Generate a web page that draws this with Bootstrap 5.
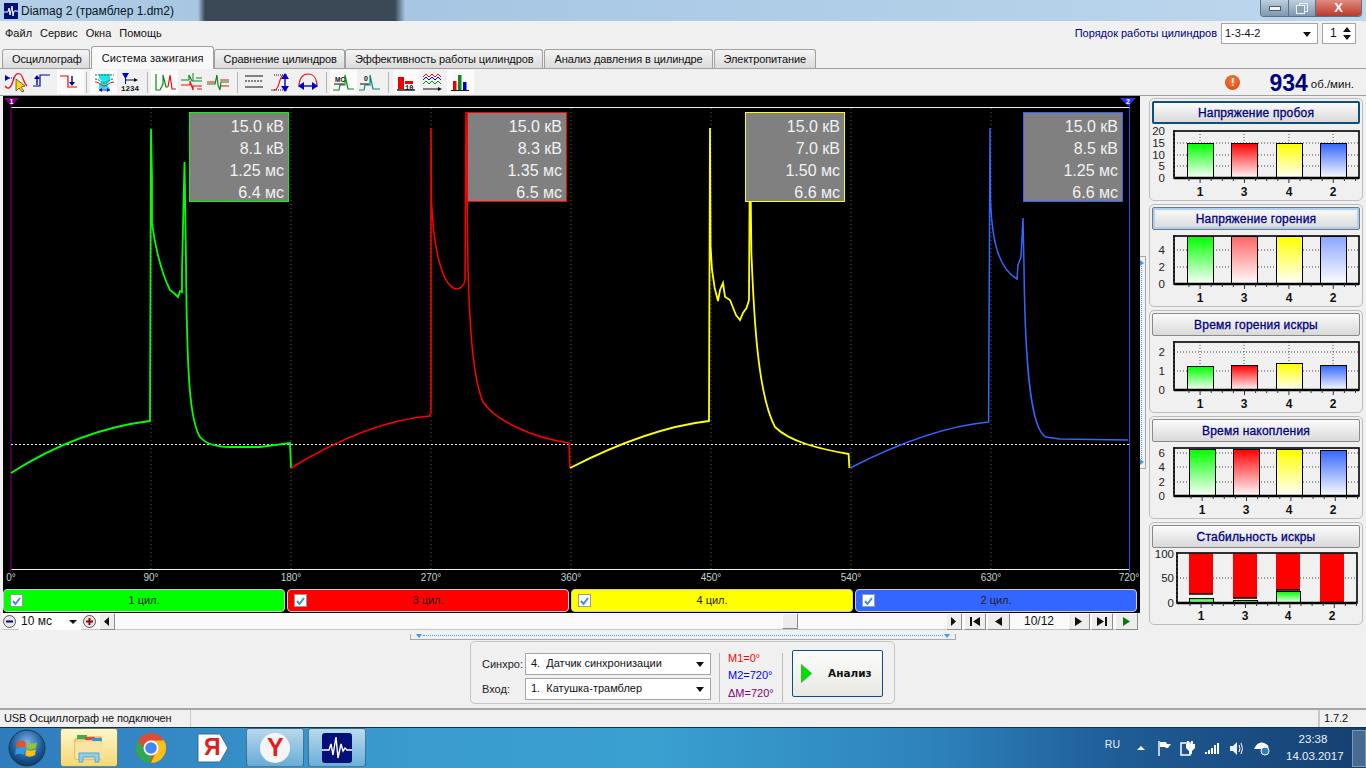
<!DOCTYPE html>
<html lang="ru">
<head>
  <meta charset="UTF-8" />
  <title>Diamag 2</title>
  <link href="https://cdn.jsdelivr.net/npm/bootstrap@5.3.3/dist/css/bootstrap.min.css" rel="stylesheet">
  <style>
    html, body { height: 768px; overflow: hidden; }
    body {
      background-color: #f0f0f0;
      font-family: "Liberation Sans", Arial, sans-serif;
      font-size: 11px;
      letter-spacing: 0;
      color: #111;
    }
    svg { display: block; }

    /* window title */
    #titlebar { height: 21px; flex: none; background: linear-gradient(90deg, #b5d0e8 0, #a8c6e2 198px, #3b4855 205px, #3b4855 395px, #a6c6e3 405px, #bdd7ed 100%); font-size: 12px; }
    #titlebar .app-name { color: #0a1522; margin-left: 3px; font-size: 12px; }
    .win-btns { height: 17px; margin-right: 4px; border: 1px solid #5b6f85; border-top: 0; border-radius: 0 0 4px 4px; overflow: hidden; }
    .win-btns div { height: 100%; background: linear-gradient(#bdcfe0, #7f97ad); border-right: 1px solid #5b6f85; }
    .win-btns .w-min { width: 28px; }
    .win-btns .w-max { width: 27px; }
    .win-btns .w-close { width: 45px; background: linear-gradient(#e08a7e, #b93a2c); border: 0; color: #fff; font-size: 13px; font-weight: 700; line-height: 15px; text-align: center; }

    #menubar { height: 25px; flex: none; padding: 0 5px 0 0; }
    #menubar .menu-item { margin-left: 5px; margin-right: 3px; font-size: 11px; }
    .order-lbl { color: #00007f; margin-right: 4px; }
    .fake-sel { border: 1px solid #a5a5a5; background: #fff; height: 21px; padding: 0 0 0 3px; font-size: 11px; color: #111; border-radius: 0; line-height: 19px; position: relative; }
    .fake-sel::after { content: ""; position: absolute; right: 6px; top: 8px; border: 4px solid transparent; border-top: 5px solid #111; border-bottom: 0; }
    .fake-sel.no-arrow::after { display: none; }
    .spin-arr { position: absolute; right: 4px; top: 2px; }

    #tabs { height: 22px; flex: none; padding-left: 2px; border: 0; flex-wrap: nowrap; align-items: flex-end; }
    #tabs .nav-link { height: 19px; padding: 2px 7px 0 9px; color: #111; font-size: 11px; letter-spacing: -.1px; border: 1px solid #a0a0a0; border-bottom: 0; border-radius: 3px 3px 0 0; background: linear-gradient(#f4f4f4, #dcdcdc); margin: 0 1px 0 0; white-space: nowrap; line-height: 15px; }
    #tabs .nav-link.active { height: 23px; background: #f8f8f8; padding: 4px 9px 0 10px; margin: 0 0 -1px; letter-spacing: .1px; position: relative; z-index: 2; }
    #tabs .nav-link.tab-wide { padding-right: 9px; }
    #tabs .nav-link.tab-tight { margin-right: 0; }

    #toolbar { height: 28px; flex: none; border-top: 1px solid #a0a0a0; border-bottom: 1px solid #a0a0a0; padding-left: 3px; padding-top: 1px; }
    .tb-btn { width: 27px; height: 24px; flex: none; }
    .tb-on { background: #fbfbfb; }
    .tb-sep { flex: none; border-left: 1px solid #b5b5b5; margin-top: 2px; height: 21px; }
    .rpm-val { font-size: 23px; font-weight: 700; color: #00007f; line-height: 24px; margin-left: 29px; }
    .rpm-unit { font-size: 11.5px; color: #111; margin: 4px 12px 0 3px; }
    .alert-dot { width: 15px; height: 15px; border-radius: 50%; background: radial-gradient(circle at 50% 35%, #f47a3c, #d8430f); color: #fff; font-weight: 700; font-size: 11px; line-height: 15px; text-align: center; }

    #mainarea { height: 534px; flex: none; }
    #scopecol { width: 1140px; padding-left: 3px; flex: none; }
    #scope { width: 1137px; background: #000; position: relative; height: 517px; }
    .val-box { position: absolute; top: 16px; width: 100px; height: 90px; background: #808080; border: 1px solid; color: #f2f2f2; font-size: 16px; line-height: 22px; text-align: right; padding: 3px 4px 0 0; }
    .cyl-row { gap: 2px; height: 23px; padding-right: 3px; }
    .cyl-btn { flex: 1 1 0; border: 1px solid #ccc; border-radius: 4px; color: #222; font-size: 11px; line-height: 20px; text-align: center; position: relative; height: 23px; }
    .cyl-check { position: absolute; left: 6px; top: 4px; width: 13px; height: 13px; background: #fff; border: 1px solid #999; }
    #seekrow { height: 17px; background: #f9f9f9; border-bottom: 1px solid #c4c4c4; width: 1136px; margin-left: -1px; }
    .rnd-btn { width: 15px; height: 15px; flex: none; }
    .step-btn { height: 17px; flex: none; background: #ededed; border: 1px solid #fff; border-right-color: #8e8e8e; border-bottom-color: #8e8e8e; display: flex; align-items: center; justify-content: center; }
    .seek-track { flex: 1 1 0; position: relative; }
    .seek-thumb { position: absolute; left: 667px; top: 0; width: 16px; height: 16px; background: #ececec; border: 1px solid #fff; border-right-color: #888; border-bottom-color: #888; }
    .pg-num { width: 58px; text-align: center; font-size: 12px; flex: none; }
    .zoom-sel { width: 62px; border: 0; background: #fff; height: 17px; font-size: 12px; padding: 0 0 0 2px; line-height: 16px; position: relative; flex: none; margin-left: 2px; }
    .zoom-sel::after { content: ""; position: absolute; right: 4px; top: 7px; border: 4px solid transparent; border-top: 4px solid #111; border-bottom: 0; }

    .split-v { width: 6px; height: 213px; margin-top: 160px; border: 1px solid #a8a8a8; border-left: 0; flex: none; position: relative; }
    .split-v i { position: absolute; left: 1px; top: 9px; bottom: 9px; border-left: 1px dotted #3d9bf0; }
    .split-v::before, .split-v::after { content: ""; position: absolute; left: 0; border: 3px solid transparent; border-left: 4px solid #3d9bf0; border-right: 0; }
    .split-v::before { top: 3px; }
    .split-v::after { bottom: 3px; }
    #rightcol { width: 214px; margin-left: 3px; padding-top: 2px; gap: 3px; flex: none; }
    .chart-panel { height: 103px; border: 1px solid #bcbcbc; border-radius: 5px; padding: 2px 2px 0; overflow: hidden; }
    .chart-title { height: 23px; line-height: 22px; text-align: center; color: #00007f; font-size: 12px; letter-spacing: .2px; border: 1px solid #8a8a8a; border-radius: 2px; background: linear-gradient(#fbfbfb, #d9d9d9); -webkit-text-stroke: .3px #00007f; }
    .chart-title.t-focus { border: 2px solid #0b4e7f; line-height: 20px; }
    .chart-title.t-hover { border: 1px solid #777; box-shadow: inset 0 0 0 2px #a9d0f5; }

    #bottomarea { height: 78px; flex: none; }
    .split-h { width: 546px; height: 6px; margin-left: 410px; border: 1px solid #a8a8a8; border-top: 0; position: relative; margin-top: 4px; }
    .split-h i { position: absolute; left: 12px; right: 12px; top: 1px; border-top: 1px dotted #3d9bf0; }
    .split-h::before, .split-h::after { content: ""; position: absolute; top: 0; border: 3px solid transparent; border-top: 4px solid #3d9bf0; border-bottom: 0; }
    .split-h::before { left: 5px; }
    .split-h::after { right: 5px; }
    .run-panel { width: 425px; height: 63px; margin: 1px 0 0 470px; border: 1px solid #c4c4c4; border-radius: 5px; position: relative; padding: 11px 0 0 11px; }
    .run-lbl { width: 43px; font-size: 11px; color: #222; }
    .run-sel { width: 186px; font-size: 11px; padding-left: 5px; height: 22px; }
    .run-vsep { border-left: 1px solid #bbb; height: 49px; margin: 0 8px; }
    .mark-txt { font-size: 11px; line-height: 17px; width: 54px; margin-top: -3px; }
    .go-btn { width: 91px; height: 47px; padding: 0; border: 1px solid #0b4e7f; border-radius: 2px; background: linear-gradient(#fcfcfc, #e8e8e2); color: #111; font-family: "DejaVu Sans", sans-serif; font-size: 10.5px; font-weight: 700; margin-top: -3px; }

    #statusbar { height: 19px; flex: none; border-top: 2px solid #a5a5a5; line-height: 16px; letter-spacing: -.1px; }
    .st-cell { border-right: 1px solid #c9c9c9; padding-left: 4px; height: 17px; }

    #taskbar { height: 41px; flex: none; background: linear-gradient(90deg, #2f7cbd 0, #3a9bce 30%, #39a0d0 48%, #2e83bd 68%, #1f5c96 82%, #153f70 100%); border-top: 1px solid #12324f; color: #fff; position: relative; }
    .task-tile { width: 58px; height: 39px; flex: none; margin-left: 4px; border: 1px solid rgba(20, 60, 90, .6); border-radius: 3px; }
    .tile-active { background: linear-gradient(#fdf7c9, #f3d873); }
    .tile-open { background: linear-gradient(rgba(255,255,255,.65), rgba(255,255,255,.25)); }
    .tile-plain { border-color: transparent; }
    .tray-txt { font-size: 10.5px; color: #eaf2fa; }
    .clock { width: 54px; text-align: center; font-size: 11.5px; line-height: 17px; color: #eaf2fa; margin-left: 16px; }
    .show-desk { width: 14px; height: 37px; margin: 1px 0 0 12px; border: 1px solid #7d99b3; background: rgba(255,255,255,.22); flex: none; }
    .tray-ico { margin-left: 9px; }
  </style>
</head>
<body class="d-flex flex-column">

  <div id="titlebar" class="d-flex justify-content-between">
    <div class="d-flex align-items-center">
      <svg class="ms-1" width="14" height="16" viewBox="0 0 14 16"><rect width="14" height="16" fill="#050f7a"/><path d="M0 9H4L5 5 6 12 8 3 9 13 10 8H14" fill="none" stroke="#fff" stroke-width="1"/></svg>
      <span class="app-name">Diamag 2 (трамблер 1.dm2)</span>
    </div>
    <div class="win-btns d-flex">
      <div class="w-min d-flex align-items-center justify-content-center"><svg width="12" height="5"><rect x=".5" y=".5" width="11" height="4" fill="#eef3f8" stroke="#4d5d6d"/></svg></div>
      <div class="w-max d-flex align-items-center justify-content-center"><svg width="12" height="11"><rect x="3.5" y=".5" width="8" height="8" fill="none" stroke="#eef3f8"/><rect x=".5" y="2.5" width="8" height="8" fill="#8aa0b5" stroke="#eef3f8"/></svg></div>
      <div class="w-close">X</div>
    </div>
  </div>

  <div id="menubar" class="d-flex align-items-center">
    <span class="menu-item">Файл</span><span class="menu-item">Сервис</span><span class="menu-item">Окна</span><span class="menu-item">Помощь</span>
    <div class="ms-auto d-flex align-items-center">
      <span class="order-lbl">Порядок работы цилиндров</span>
      <div class="fake-sel" style="width:97px">1-3-4-2</div>
      <div class="fake-sel no-arrow ms-1" style="width:34px;padding-left:7px;font-size:12px">1
        <svg class="spin-arr" width="8" height="15"><path d="M0 6 4 1 8 6ZM0 9 4 14 8 9Z" fill="#111"/></svg>
      </div>
      <span style="width:5px"></span>
    </div>
  </div>

  <ul id="tabs" class="nav nav-tabs">
    <li class="nav-item"><a class="nav-link" href="#">Осциллограф</a></li>
    <li class="nav-item"><a class="nav-link active" href="#">Система зажигания</a></li>
    <li class="nav-item"><a class="nav-link tab-tight" href="#">Сравнение цилиндров</a></li>
    <li class="nav-item"><a class="nav-link tab-wide" href="#">Эффективность работы цилиндров</a></li>
    <li class="nav-item"><a class="nav-link tab-wide" href="#">Анализ давления в цилиндре</a></li>
    <li class="nav-item"><a class="nav-link tab-wide" href="#">Электропитание</a></li>
  </ul>

  <div id="toolbar" class="d-flex">
    <div class="tb-btn"><svg width="27" height="24"><path d="M2 16C5 20 8 18 10 11S14 3 17 4 20 12 24 16" fill="none" stroke="#e11" stroke-width="1.3"/><path d="M4 8H12" stroke="#00c" stroke-dasharray="1 1"/><path d="M2 5 7 8 2 11Z" fill="#00c"/><path d="M13 9V21L16 18 19 22 21 21 18 17 22 16Z" fill="#ffd800" stroke="#333" stroke-width=".7"/></svg></div>
    <div class="tb-btn"><svg width="27" height="24"><path d="M3 16H10V5H20" fill="none" stroke="#00a" stroke-width="1.2"/><path d="M4 9 7 5 10 9ZM6.3 9H7.7V15H6.3Z" fill="#00a"/></svg></div>
    <div class="tb-btn tb-on"><svg width="27" height="24"><path d="M3 6H11V17H20" fill="none" stroke="#e00" stroke-width="1.2"/><path d="M12 12 15 16 18 12ZM14.3 6H15.7V12H14.3Z" fill="#008"/></svg></div>
    <div class="tb-sep" style="margin-left:2px;margin-right:3px"></div>
    <div class="tb-btn tb-on"><svg width="27" height="24"><path d="M9 4H20V11L17 14 20 19H9V14L12 11 9 8Z" fill="#19e6ef"/><path d="M5 5H24M5 9C10 9 11 13 14 13S19 9 24 9" fill="none" stroke="#0a7a2a" stroke-dasharray="2 1"/><path d="M5 12C10 12 11 16 14 16S19 12 24 12" fill="none" stroke="#e11"/><path d="M9 20H20" stroke="#00c"/><path d="M9 20 12 18V22ZM20 20 17 18V22Z" fill="#00c"/></svg></div>
    <div class="tb-btn"><svg width="27" height="24"><path d="M5 3H12L8.5 9Z" fill="#00c"/><path d="M8.5 8V14" stroke="#00c"/><path d="M9 10H19" stroke="#111"/><path d="M21 10 17 8V12Z" fill="#111"/><text x="4" y="21" font-family="Liberation Mono, monospace" font-size="7.5" font-weight="700" fill="#111">1234</text></svg></div>
    <div class="tb-sep" style="margin-left:3px;margin-right:3px"></div>
    <div class="tb-btn tb-on"><svg width="27" height="24"><path d="M5 4V20H9L12 14V5L15 17H17" fill="none" stroke="#0a8a1a" stroke-width="1.2"/><path d="M17 17 19 5 21 19H25" fill="none" stroke="#e11" stroke-width="1.2"/></svg></div>
    <div class="tb-btn"><svg width="27" height="24"><path d="M3 10H11V5L14 11H24" fill="none" stroke="#0a8a1a" stroke-width="1.2"/><path d="M15 3V11M18 8H24" stroke="#0a8a1a"/><path d="M3 15H12V11L15 20V16H24M19 19H24" fill="none" stroke="#e11" stroke-width="1.2"/></svg></div>
    <div class="tb-btn"><svg width="27" height="24"><path d="M2 14H10L12 5 13 15 15 20 16 12H24" fill="none" stroke="#0a8a1a" stroke-width="1.2"/><path d="M2 12H10M15 10H24M15 16H24" stroke="#e11" stroke-width="1.2"/></svg></div>
    <div class="tb-sep" style="margin-left:5px;margin-right:3px"></div>
    <div class="tb-btn"><svg width="27" height="24"><path d="M4 6H22M4 17H22" stroke="#111" stroke-width="1.2"/><path d="M4 11H22" stroke="#111" stroke-dasharray="2 1"/></svg></div>
    <div class="tb-btn"><svg width="27" height="24"><path d="M3 20H7C11 20 12 5 15 5" fill="none" stroke="#e11" stroke-width="1.2"/><path d="M6 5H20M6 20H20" stroke="#111" stroke-dasharray="1 1"/><path d="M17 7V18" stroke="#00c" stroke-width="1.4"/><path d="M13 9 17 3 21 9ZM13 16 17 22 21 16Z" fill="#00c"/></svg></div>
    <div class="tb-btn"><svg width="27" height="24"><path d="M4 17C4 8 8 4 13 4S22 8 22 17" fill="none" stroke="#e11" stroke-width="1.2"/><path d="M7 16H19" stroke="#00c" stroke-width="1.4"/><path d="M3 16 9 12V20ZM23 16 17 12V20Z" fill="#00c"/></svg></div>
    <div class="tb-sep" style="margin-left:4px;margin-right:3px"></div>
    <div class="tb-btn tb-on"><svg width="27" height="24"><path d="M3 20H9L10 15H15V5L18 19H24" fill="none" stroke="#0a8a1a" stroke-width="1.2"/><path d="M4 14H14" stroke="#111"/><text x="5" y="12" font-family="Liberation Sans, sans-serif" font-size="6.5" font-weight="700" fill="#111">MC</text></svg></div>
    <div class="tb-btn"><svg width="27" height="24"><path d="M2 20H7L8 15H13V5L16 19H23" fill="none" stroke="#0a8a7a" stroke-width="1.2"/><path d="M3 14H12" stroke="#111"/><text x="7" y="11" font-family="Liberation Sans, sans-serif" font-size="7" font-weight="700" fill="#111">0</text></svg></div>
    <div class="tb-sep" style="margin-left:4px;margin-right:4px"></div>
    <div class="tb-btn tb-on"><svg width="27" height="24"><rect x="5" y="7" width="6" height="12" fill="#e00"/><rect x="12" y="11" width="8" height="3" fill="#e00"/><path d="M4 20H22" stroke="#111" stroke-width="1.4"/><text x="12" y="19.5" font-family="Liberation Mono, monospace" font-size="7" font-weight="700" fill="#111">10</text></svg></div>
    <div class="tb-btn"><svg width="27" height="24"><path d="M3 7 6 4 9 7 12 4 15 7 18 4 21 7" fill="none" stroke="#e11"/><path d="M3 10 6 7 9 10 12 7 15 10 18 7 21 10" fill="none" stroke="#00c"/><path d="M3 14 6 11 9 14 12 11 15 14 18 11 21 14" fill="none" stroke="#0a8a1a"/><path d="M3 19H20" stroke="#111"/><path d="M22 19 18 17V21Z" fill="#111"/></svg></div>
    <div class="tb-btn tb-on"><svg width="27" height="24"><rect x="6" y="11" width="3.5" height="9" fill="#e00"/><rect x="11" y="5" width="3.5" height="15" fill="#0a8a1a"/><rect x="16" y="12" width="3.5" height="8" fill="#00c"/><path d="M4 20.5H22" stroke="#111"/></svg></div>
    <div class="ms-auto d-flex align-items-center">
      <div class="alert-dot">!</div>
      <span class="rpm-val">934</span><span class="rpm-unit">об./мин.</span>
    </div>
  </div>

  <div id="mainarea" class="d-flex">
    <div id="scopecol">
      <div id="scope" class="d-flex flex-column">
        <svg width="1137" height="493" viewBox="3 96 1137 493">
          <g stroke="#5a5a5a" stroke-dasharray="1 3">
            <path d="M151 108V569M291 108V569M431 108V569M571 108V569M711 108V569M851 108V569M991 108V569"/>
          </g>
          <path d="M11 107.500H1130M11 569.500H1130" stroke="#eee"/>
          <path d="M11 98V572" stroke="#800080"/>
          <path d="M1129.500 98V572" stroke="#2a4ff5"/>
          <path d="M11 444.500H1130" stroke="#f4f4f4" stroke-dasharray="2 2"/>
          <!-- traces, digitised from the capture -->
          <path fill="none" stroke="#0f0" stroke-width="1.8" d="M11 473C55 445 100 427 150 421L151 129 152 178 152 223C154 240 160 270 170 290L175 294 178 297 180 291 182 292 182 273 183 227 184.500 162 185 190 186 263C187 380 190 420 200 437C206 444 215 447 230 447L260 447 290 443 291 468"/>
          <path fill="none" stroke="#f00" stroke-width="1.5" d="M291 468C340 438 385 420 429 416L431 413 431 128 431.500 200C433 240 440 285 456 289C461 289 464 286 465 280L466 112 468 267C470 340 474 380 483 402C495 420 530 437 569 443L570 468"/>
          <path fill="none" stroke="#ff0" stroke-width="1.8" d="M570 468C615 445 665 426 709 421L710 128 710.600 246 712 270 714.700 288 718 301 720 290 723 283 725 296.700 730 300 736 315 740 320 743 313 746.500 308 749 300 750 130 751.400 253C754 320 758 395 775 427C790 442 820 449 848.600 454L849.400 468"/>
          <path fill="none" stroke="#36f" stroke-width="1.5" d="M850 468C895 445 945 426 988.600 422L990 128 990.500 200C992 240 998 268 1017 279L1018 265 1021 257 1023 218 1024 267C1025 360 1030 430 1046 437L1060 439 1128 440"/>
          <path d="M4 98H19L11.500 106Z" fill="#800080"/>
          <text x="11.500" y="104" text-anchor="middle" font-family="Liberation Sans, sans-serif" font-size="7" font-weight="700" fill="#fff">1</text>
          <path d="M1120 98H1136L1128 106Z" fill="#2a2ff5"/>
          <text x="1128" y="104" text-anchor="middle" font-family="Liberation Sans, sans-serif" font-size="7" font-weight="700" fill="#fff">2</text>
          <g font-family="Liberation Sans, sans-serif" font-size="10" fill="#c4d6d0" text-anchor="middle">
            <text x="11" y="581">0°</text><text x="151" y="581">90°</text><text x="291" y="581">180°</text><text x="431" y="581">270°</text><text x="571" y="581">360°</text><text x="711" y="581">450°</text><text x="851" y="581">540°</text><text x="991" y="581">630°</text><text x="1129" y="581">720°</text>
          </g>
        </svg>
        <div class="val-box" style="left:186px;border-color:#0f0">15.0 кВ<br>8.1 кВ<br>1.25 мс<br>6.4 мс</div>
        <div class="val-box" style="left:464px;border-color:#f00">15.0 кВ<br>8.3 кВ<br>1.35 мс<br>6.5 мс</div>
        <div class="val-box" style="left:742px;border-color:#ff0">15.0 кВ<br>7.0 кВ<br>1.50 мс<br>6.6 мс</div>
        <div class="val-box" style="left:1020px;border-color:#36f">15.0 кВ<br>8.5 кВ<br>1.25 мс<br>6.6 мс</div>
        <div class="cyl-row d-flex">
          <div class="cyl-btn" style="background:#0f0"><span class="cyl-check"><svg width="11" height="11"><path d="M2 6 4.500 9 9 3" fill="none" stroke="#3d8fe0" stroke-width="2"/></svg></span>1 цил.</div>
          <div class="cyl-btn" style="background:#f00"><span class="cyl-check"><svg width="11" height="11"><path d="M2 6 4.500 9 9 3" fill="none" stroke="#3d8fe0" stroke-width="2"/></svg></span>3 цил.</div>
          <div class="cyl-btn" style="background:#ff0"><span class="cyl-check"><svg width="11" height="11"><path d="M2 6 4.500 9 9 3" fill="none" stroke="#3d8fe0" stroke-width="2"/></svg></span>4 цил.</div>
          <div class="cyl-btn" style="background:#36f"><span class="cyl-check"><svg width="11" height="11"><path d="M2 6 4.500 9 9 3" fill="none" stroke="#3d8fe0" stroke-width="2"/></svg></span>2 цил.</div>
        </div>
      </div>
      <div id="seekrow" class="d-flex align-items-center">
        <div class="rnd-btn"><svg width="15" height="15"><circle cx="7.500" cy="7.500" r="6" fill="#e8e8e8" stroke="#555"/><path d="M4 7.500H11" stroke="#00007f" stroke-width="2"/></svg></div>
        <div class="zoom-sel">10 мс</div>
        <div class="rnd-btn" style="margin-left:1px"><svg width="15" height="15"><circle cx="7.500" cy="7.500" r="6" fill="#e8e8e8" stroke="#555"/><path d="M4 7.500H11M7.500 4V11" stroke="#900" stroke-width="2"/></svg></div>
        <div class="step-btn" style="width:16px;margin-left:2px"><svg width="6" height="9"><path d="M5 0V9L0 4.500Z" fill="#111"/></svg></div>
        <div class="seek-track align-self-stretch"><div class="seek-thumb"></div></div>
        <div class="step-btn" style="width:16px"><svg width="6" height="9"><path d="M0 0V9L5 4.500Z" fill="#111"/></svg></div>
        <div class="step-btn" style="width:22px;margin-left:2px"><svg width="11" height="9"><path d="M10 0V9L3 4.500Z M0 0H2V9H0Z" fill="#111"/></svg></div>
        <div class="step-btn" style="width:23px;margin-left:1px"><svg width="8" height="9"><path d="M7 0V9L0 4.500Z" fill="#111"/></svg></div>
        <div class="pg-num">10/12</div>
        <div class="step-btn" style="width:22px"><svg width="8" height="9"><path d="M0 0V9L7 4.500Z" fill="#111"/></svg></div>
        <div class="step-btn" style="width:22px;margin-left:1px"><svg width="11" height="9"><path d="M0 0V9L7 4.500Z M8 0H10V9H8Z" fill="#111"/></svg></div>
        <div class="step-btn" style="width:23px;margin-left:2px"><svg width="8" height="9"><path d="M0 0V9L7 4.500Z" fill="#0a7a0a"/></svg></div>
      </div>
    </div>
    <div class="split-v"><i></i></div>
    <div id="rightcol" class="d-flex flex-column"></div>
  </div>

  <div id="bottomarea">
    <div class="split-h"><i></i></div>
    <div class="run-panel d-flex">
      <div>
        <div class="d-flex align-items-center" style="margin-bottom:3px">
          <span class="run-lbl">Синхро:</span><div class="fake-sel run-sel">4.&nbsp; Датчик синхронизации</div>
        </div>
        <div class="d-flex align-items-center">
          <span class="run-lbl">Вход:</span><div class="fake-sel run-sel">1.&nbsp; Катушка-трамблер</div>
        </div>
      </div>
      <div class="run-vsep"></div>
      <div class="mark-txt">
        <div style="color:#f00">М1=0°</div>
        <div style="color:#00f">М2=720°</div>
        <div style="color:#800080;margin-top:1px">ΔМ=720°</div>
      </div>
      <div class="run-vsep" style="margin-left:0;margin-right:9px"></div>
      <button class="btn go-btn d-flex align-items-center">
        <svg class="ms-2" width="11" height="19"><path d="M0 0 11 9.500 0 19Z" fill="#00e000" stroke="#888" stroke-width=".5"/></svg>
        <span style="margin-left:16px">Анализ</span>
      </button>
    </div>
  </div>

  <div id="statusbar" class="d-flex">
    <div class="st-cell" style="width:191px">USB Осциллограф не подключен</div>
    <div class="st-cell flex-grow-1"></div>
    <div class="st-cell" style="width:47px;border:0;border-left:1px solid #c9c9c9">1.7.2</div>
  </div>

  <div id="taskbar" class="d-flex">
    <svg class="ms-2" style="margin-top:1px" width="38" height="38" viewBox="0 0 38 38">
      <defs><radialGradient id="orb" cx=".5" cy=".35" r=".7"><stop offset="0" stop-color="#7fb7e4"/><stop offset=".6" stop-color="#1c5c9c"/><stop offset="1" stop-color="#0d2f57"/></radialGradient></defs>
      <circle cx="19" cy="19" r="18" fill="url(#orb)" stroke="#1a3a55"/>
      <path d="M9 13Q13 10 18 13L17 19Q13 16 8 19Z" fill="#e8502a"/>
      <path d="M19.500 13.500Q24 16 29 13L28 19Q23 22 18.500 19.500Z" fill="#8cc63f"/>
      <path d="M7.800 20Q13 17 17 20L16 26Q12 23 7 26Z" fill="#2f9be0"/>
      <path d="M18.300 20.500Q23 23 27.800 20L27 26Q22 29 17.300 26.500Z" fill="#fdc010"/>
    </svg>
    <div class="task-tile tile-active d-flex justify-content-center align-items-center" style="margin-left:14px">
      <svg width="32" height="30" viewBox="0 0 32 30"><path d="M2 6H12L14 4H28V26H2Z" fill="#f6d98a" stroke="#c9a858"/><path d="M4 2H14V6H4Z" fill="#3fae49"/><path d="M12 4H22V7H12Z" fill="#d94a3a"/><path d="M19 5H29V8H19Z" fill="#3d8fe0"/><path d="M2 9H30V26H2Z" fill="#fbe6a8" opacity=".8"/><path d="M6 20H26V29H22V24H10V29H6Z" fill="#8fd0ec" stroke="#5ca6c8"/></svg>
    </div>
    <div class="task-tile tile-plain d-flex justify-content-center align-items-center">
      <svg width="30" height="30" viewBox="0 0 30 30"><circle cx="15" cy="15" r="15" fill="#dd4b39"/><path d="M15 30A15 15 0 0 1 2 7.500L9.800 18 15 15Z" fill="#2fa84f"/><path d="M15 30A15 15 0 0 0 28 7.500H15L20 18Z" fill="#fbc116"/><circle cx="15" cy="15" r="7.500" fill="#fff"/><circle cx="15" cy="15" r="5.800" fill="#4285f4"/></svg>
    </div>
    <div class="task-tile tile-plain d-flex justify-content-center align-items-center position-relative">
      <svg width="32" height="30" viewBox="0 0 32 30"><path d="M1 1H23L31 15 23 29H1Z" fill="#fff" stroke="#3a6f92"/></svg>
      <span class="position-absolute fw-bold" style="left:19px;top:3px;color:#e02020;font-size:23px;line-height:30px">Я</span>
    </div>
    <div class="task-tile tile-open d-flex justify-content-center align-items-center position-relative">
      <svg width="30" height="30"><circle cx="15" cy="15" r="15" fill="#f5f5f5"/></svg>
      <span class="position-absolute fw-bold" style="left:20px;top:3px;color:#e02020;font-size:25px;line-height:30px">Y</span>
    </div>
    <div class="task-tile tile-open d-flex justify-content-center align-items-center">
      <svg width="30" height="30" viewBox="0 0 30 30"><rect width="30" height="30" rx="3" fill="#050f7a"/><path d="M0 17H7L9 11 11 22 14 4 16 25 19 11 21 18 23 15 25 17H30" fill="none" stroke="#fff" stroke-width="1.4"/></svg>
    </div>
    <div class="ms-auto d-flex align-items-center">
      <span class="tray-txt" style="margin-bottom:6px">RU</span>
      <svg style="margin-left:16px" width="10" height="6"><path d="M1 5 5 1 9 5Z" fill="#fff"/></svg>
      <svg style="margin-left:11px" width="15" height="15"><path d="M2 0V15" stroke="#fff" stroke-width="1.4"/><path d="M3 1H9L10 3H14L11 7H9L8 6H3Z" fill="#fff"/></svg>
      <svg style="margin-left:8px" width="15" height="16"><rect x="1" y="3" width="9" height="12" fill="none" stroke="#fff" stroke-width="1.5"/><path d="M7 1H9V4H11V1H13V4H15V8L12 11V14H9V11L6 8V4H7Z" fill="#fff"/></svg>
      <svg class="tray-ico" width="16" height="13"><path d="M1 10H3V12H1ZM4 8H6V12H4ZM7 6H9V12H7ZM10 3H12V12H10ZM13 1H15V12H13Z" fill="#fff"/></svg>
      <svg class="tray-ico" width="15" height="15"><path d="M1 5H4L8 1V14L4 10H1Z" fill="#eef"/><path d="M10 4Q12 7.500 10 11M12 2Q15 7.500 12 13" fill="none" stroke="#fff"/></svg>
      <svg class="tray-ico" width="17" height="15"><path d="M1 8Q5 0 11 2T15 8H3Z" fill="#fff"/><circle cx="12" cy="10" r="4" fill="#2f7cc0" stroke="#fff"/></svg>
      <div class="clock">23:38<br>14.03.2017</div>
      <div class="show-desk"></div>
    </div>
  </div>

  <svg width="0" height="0" class="position-absolute">
    <defs>
      <linearGradient id="g1" x1="0" y1="0" x2="0" y2="1"><stop offset="0" stop-color="#0f0"/><stop offset="1" stop-color="#fff"/></linearGradient>
      <linearGradient id="g3" x1="0" y1="0" x2="0" y2="1"><stop offset="0" stop-color="#f00"/><stop offset="1" stop-color="#fff"/></linearGradient>
      <linearGradient id="g4" x1="0" y1="0" x2="0" y2="1"><stop offset="0" stop-color="#ff0"/><stop offset="1" stop-color="#fff"/></linearGradient>
      <linearGradient id="g2" x1="0" y1="0" x2="0" y2="1"><stop offset="0" stop-color="#36f"/><stop offset="1" stop-color="#fff"/></linearGradient>
      <linearGradient id="g3b" x1="0" y1="0" x2="0" y2="1"><stop offset="0" stop-color="#f66"/><stop offset="1" stop-color="#fff"/></linearGradient>
      <linearGradient id="g2b" x1="0" y1="0" x2="0" y2="1"><stop offset="0" stop-color="#8aa6ff"/><stop offset="1" stop-color="#fff"/></linearGradient>
    </defs>
  </svg>

  <script>
    // all coordinates are page pixels, the viewBox of each svg maps them into its panel
    const X1 = [1187, 1231, 1276, 1320], X4 = [1189, 1233, 1276, 1320];
    const charts = [
      { top: 98, title: "Напряжение пробоя", cls: "t-focus", l: 1174, r: 1359, t: 131, b: 178, lr: 1165,
        ticks: [["20",131],["15",143],["10",155],["5",166],["0",178]], grid: [143,155,166],
        xs: X1, w: 26, tops: [143,143,143,143], fills: ["g1","g3","g4","g2"], lab: [1200,1244,1289,1333], gv: 1 },
      { top: 204, title: "Напряжение горения", cls: "t-hover", l: 1174, r: 1359, t: 236, b: 284, lr: 1165,
        ticks: [["4",250],["2",267],["0",284]], grid: [250,267],
        xs: X1, w: 26, tops: [236,236,236,236], fills: ["g1","g3b","g4","g2b"], lab: [1200,1244,1289,1333] },
      { top: 310, title: "Время горения искры", cls: "", l: 1174, r: 1359, t: 342, b: 390, lr: 1165,
        ticks: [["2",352],["1",371],["0",390]], grid: [352,371],
        xs: X1, w: 26, tops: [366,365,363,365], fills: ["g1","g3","g4","g2"], lab: [1200,1244,1289,1333], gv: 1 },
      { top: 416, title: "Время накопления", cls: "", l: 1174, r: 1359, t: 448, b: 496, lr: 1165,
        ticks: [["6",453],["4",467],["2",482],["0",496]], grid: [453,467,482],
        xs: X4, w: 26, tops: [449,449,449,450], fills: ["g1","g3","g4","g2"], lab: [1202,1246,1289,1333] },
      { top: 522, title: "Стабильность искры", cls: "", l: 1177, r: 1357, t: 553, b: 603, lr: 1174,
        ticks: [["100",554],["50",578],["0",603]], grid: [578],
        xs: X4, w: 24, tops: [598,600,591,603], fills: ["g1","g1","g1","g1"], lab: [1201,1245,1288,1332], red: [594,598,590,603] }
    ];

    function chartSvg(c) {
      let s = "";
      if (c.gv) c.lab.forEach(x => s += `<path d="M${x} ${c.t}V${c.b}" stroke="#555" stroke-dasharray="1 2"/>`);
      c.grid.forEach(y => s += `<path d="M${c.l} ${y}H${c.r}" stroke="#444" stroke-dasharray="1 2"/>`);
      c.xs.forEach((x, i) => {
        if (c.red) s += `<rect x="${x}" y="${c.t}" width="${c.w}" height="${c.red[i] - c.t}" fill="#f00"/><path d="M${x} ${c.red[i]}H${x + c.w}" stroke="#000" stroke-width="1.5"/>`;
        if (c.tops[i] < c.b) s += `<rect x="${x + .5}" y="${c.tops[i] + .5}" width="${c.w}" height="${c.b - c.tops[i]}" fill="url(#${c.fills[i]})" stroke="#000"/>`;
      });
      s += `<rect x="${c.l}" y="${c.t}" width="${c.r - c.l}" height="${c.b - c.t}" fill="none" stroke="#000" stroke-width="1.6"/>`;
      s += `<path d="M${c.l} ${c.b}H${c.r}" stroke="#000" stroke-width="2.4"/>`;
      for (let y = c.t; y < c.b; y += 4) s += `<path d="M${c.l - 1} ${y}h2" stroke="#000"/>`;
      for (let i = 0; i < 17; i++) {
        const x = c.lab[0] - 11 + i * 11.1;
        if (x < c.r) s += `<path d="M${x} ${c.b}v${i % 4 == 1 ? 5 : 3}" stroke="#333"/>`;
      }
      c.ticks.forEach(t => s += `<text x="${c.lr}" y="${t[1] + 4}" text-anchor="end" font-size="11.5" fill="#222">${t[0]}</text>`);
      c.lab.forEach((x, i) => s += `<text x="${x}" y="${c.top + 98}" text-anchor="middle" font-size="12" font-weight="700" fill="#111">${["1","3","4","2"][i]}</text>`);
      return `<svg width="208" height="76" viewBox="1152 ${c.top + 26} 208 76" font-family="Liberation Sans, sans-serif" letter-spacing="0">${s}</svg>`;
    }

    document.getElementById("rightcol").innerHTML = charts.map(c =>
      `<div class="chart-panel"><div class="chart-title ${c.cls}">${c.title}</div>${chartSvg(c)}</div>`
    ).join("");
  </script>
</body>
</html>
